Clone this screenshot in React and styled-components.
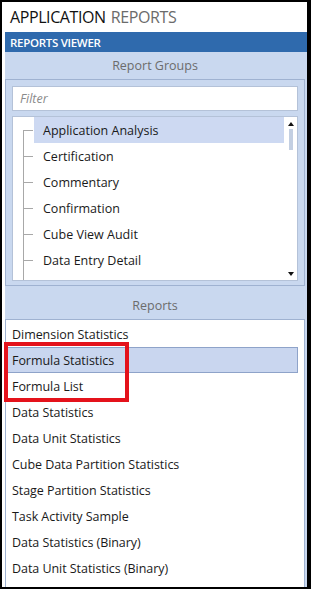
import React from "react";
import styled, { createGlobalStyle } from "styled-components";

const Global = createGlobalStyle`
  html, body { margin: 0; padding: 0; background: #000; }
  * { box-sizing: border-box; }
  body { font-family: "Open Sans", "Noto Sans", sans-serif; }
`;

const Frame = styled.div`
  width: 311px;
  height: 589px;
  border-style: solid;
  border-color: #000;
  border-width: 2px 4px 2px 2px;
  background: #fff;
  display: flex;
  flex-direction: column;
  overflow: hidden;
`;

const TitleBar = styled.div`
  height: 30px;
  padding-left: 8px;
  display: flex;
  align-items: center;
  font-size: 16px;
  letter-spacing: -0.4px;
  color: #111;
  gap: 5px;
`;

const TitleMuted = styled.span`
  color: #6b6b6b;
`;

const Main = styled.div`
  flex: 1;
  margin-left: 3px;
  display: flex;
  flex-direction: column;
  min-height: 0;
`;

const ViewerBar = styled.div`
  height: 20px;
  background: #2f6aad;
  color: #fff;
  font-size: 11.5px;
  font-weight: 600;
  letter-spacing: -0.3px;
  padding-left: 5px;
  display: flex;
  align-items: center;
`;

const Panel = styled.div`
  flex: 1;
  background: #c9d8ef;
  display: flex;
  flex-direction: column;
  min-height: 0;
  padding-right: 2px;
`;

const SectionHeader = styled.div`
  height: ${(p) => p.$h}px;
  padding-top: ${(p) => p.$pt || 0}px;
  display: flex;
  align-items: center;
  justify-content: center;
  color: #6c6c6c;
  font-size: 12.5px;
  letter-spacing: 0;
`;

const GroupBox = styled.div`
  border: 1px solid #9fb2d1;
  padding: 6px 6px 4px 6px;
  display: flex;
  flex-direction: column;
  gap: 5px;
`;

const FilterInput = styled.div`
  height: 25px;
  background: #fff;
  border: 1px solid #b4c2d8;
  display: flex;
  align-items: center;
  padding-left: 7px;
  color: #8a8a8a;
  font-style: italic;
  font-size: 12.5px;
`;

const TreeBox = styled.div`
  height: 165px;
  background: #fff;
  border: 1px solid #b4c2d8;
  display: flex;
  overflow: hidden;
  position: relative;
`;

const TreeList = styled.div`
  flex: 1;
  position: relative;
  padding-left: 21px;
`;

const TreeTrunk = styled.div`
  position: absolute;
  left: 10px;
  top: 13px;
  bottom: 0;
  border-left: 1px solid #a8a8a8;
`;

const TreeRow = styled.div`
  height: 26px;
  position: relative;
  display: flex;
  align-items: center;
  padding-left: 9px;
  font-size: 12.5px;
  color: #1a1a1a;
  letter-spacing: 0;
  background: ${(p) => (p.$selected ? "#cdd9f2" : "transparent")};
  &::before {
    content: "";
    position: absolute;
    left: -11px;
    top: 13px;
    width: 10px;
    border-top: 1px solid #a8a8a8;
  }
`;

const ScrollBar = styled.div`
  width: 13px;
  display: flex;
  flex-direction: column;
  align-items: center;
  padding: 5px 0 4px;
`;

const Arrow = styled.div`
  width: 0;
  height: 0;
  border-left: 3px solid transparent;
  border-right: 3px solid transparent;
  ${(p) =>
    p.$down
      ? "border-top: 4px solid #111;"
      : "border-bottom: 4px solid #111;"}
`;

const Track = styled.div`
  flex: 1;
  width: 100%;
  display: flex;
  justify-content: center;
  padding-top: 3px;
`;

const Thumb = styled.div`
  width: 4px;
  height: 21px;
  background: #c3cfe2;
`;

const ReportsBox = styled.div`
  flex: 1;
  background: #fff;
  border: 1px solid #9fb2d1;
  border-bottom: none;
  padding: 1px 6px 0 1px;
  position: relative;
  min-height: 0;
`;

const ReportRow = styled.div`
  height: 26px;
  display: flex;
  align-items: center;
  padding-left: 4px;
  font-size: 12.5px;
  color: #1a1a1a;
  letter-spacing: -0.05px;
  background: ${(p) => (p.$selected ? "#c9d6ef" : "transparent")};
  border: 1px solid ${(p) => (p.$selected ? "#8ea3c9" : "transparent")};
`;

const Callout = styled.div`
  position: absolute;
  left: -2px;
  top: 22px;
  width: 125px;
  height: 60px;
  border: 4px solid #e4121b;
  pointer-events: none;
`;

const groups = [
  "Application Analysis",
  "Certification",
  "Commentary",
  "Confirmation",
  "Cube View Audit",
  "Data Entry Detail",
];

const reports = [
  "Dimension Statistics",
  "Formula Statistics",
  "Formula List",
  "Data Statistics",
  "Data Unit Statistics",
  "Cube Data Partition Statistics",
  "Stage Partition Statistics",
  "Task Activity Sample",
  "Data Statistics (Binary)",
  "Data Unit Statistics (Binary)",
];

export default function App() {
  return (
    <>
      <Global />
      <Frame>
        <TitleBar>
          <span>APPLICATION</span>
          <TitleMuted>REPORTS</TitleMuted>
        </TitleBar>
        <Main>
          <ViewerBar>REPORTS VIEWER</ViewerBar>
          <Panel>
            <SectionHeader $h={27}>Report Groups</SectionHeader>
            <GroupBox>
              <FilterInput>Filter</FilterInput>
              <TreeBox>
                <TreeList>
                  <TreeTrunk />
                  {groups.map((g, i) => (
                    <TreeRow key={g} $selected={i === 0}>
                      {g}
                    </TreeRow>
                  ))}
                </TreeList>
                <ScrollBar>
                  <Arrow />
                  <Track>
                    <Thumb />
                  </Track>
                  <Arrow $down />
                </ScrollBar>
              </TreeBox>
            </GroupBox>
            <SectionHeader $h={33} $pt={6}>Reports</SectionHeader>
            <ReportsBox>
              {reports.map((r, i) => (
                <ReportRow key={r} $selected={i === 1}>
                  {r}
                </ReportRow>
              ))}
              <Callout />
            </ReportsBox>
          </Panel>
        </Main>
      </Frame>
    </>
  );
}
